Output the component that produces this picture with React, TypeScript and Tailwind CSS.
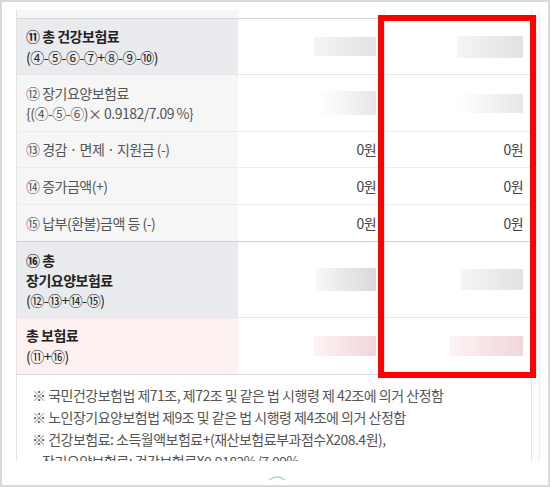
type Row = {
  h: string;
  bg: string;
  border: string;
  label: React.ReactNode;
  col2: React.ReactNode;
  col3: React.ReactNode;
};

const Blur = ({ w, h, tone = 'gray' }: { w: string; h: string; tone?: 'gray' | 'light' | 'dark' | 'pink' }) => {
  const toneClass =
    tone === 'pink'
      ? 'from-[#fdf3f4] to-[#f0d6db]'
      : tone === 'light'
        ? 'from-[#ffffff] to-[#e7e7e9]'
        : tone === 'dark'
          ? 'from-[#f7f7f7] to-[#d9d9dc]'
          : 'from-[#f5f5f5] to-[#e2e2e5]';
  return <div className={`${w} ${h} bg-linear-to-r ${toneClass}`} />;
};

const Won = () => <span className="text-[14px] tracking-[-0.6px] text-[#444]">0원</span>;

const rows: Row[] = [
  {
    h: 'h-[56px]',
    bg: 'bg-[#e9ebee]',
    border: 'border-[#e6e6e6]',
    label: (
      <div className="leading-[21px] text-[#222]">
        <p className="font-bold">⑪ 총 건강보험료</p>
        <p>(④-⑤-⑥-⑦+⑧-⑨-⑩)</p>
      </div>
    ),
    col2: <Blur w="w-[62px]" h="h-[19px]" />,
    col3: <Blur w="w-[66px]" h="h-[22px]" />,
  },
  {
    h: 'h-[57px]',
    bg: 'bg-[#f6f6f6]',
    border: 'border-[#ececec]',
    label: (
      <div className="leading-[20px] text-[#555]">
        <p>⑫ 장기요양보험료</p>
        <p>{'{(④-⑤-⑥)× 0.9182/7.09 %}'}</p>
      </div>
    ),
    col2: <Blur w="w-[57px]" h="h-[24px]" tone="light" />,
    col3: <Blur w="w-[65px]" h="h-[19px]" tone="light" />,
  },
  {
    h: 'h-[36px]',
    bg: 'bg-[#f6f6f6]',
    border: 'border-[#ececec]',
    label: <p className="text-[#555]">⑬ 경감 · 면제 · 지원금 (-)</p>,
    col2: <Won />,
    col3: <Won />,
  },
  {
    h: 'h-[37px]',
    bg: 'bg-[#f6f6f6]',
    border: 'border-[#ececec]',
    label: <p className="text-[#555]">⑭ 증가금액(+)</p>,
    col2: <Won />,
    col3: <Won />,
  },
  {
    h: 'h-[37px]',
    bg: 'bg-[#f6f6f6]',
    border: 'border-[#cfcfcf]',
    label: <p className="text-[#555]">⑮ 납부(환불)금액 등 (-)</p>,
    col2: <Won />,
    col3: <Won />,
  },
  {
    h: 'h-[76px]',
    bg: 'bg-[#e9ebee]',
    border: 'border-[#e6e6e6]',
    label: (
      <div className="leading-[20px] text-[#222]">
        <p className="font-bold">⑯ 총</p>
        <p className="font-bold">장기요양보험료</p>
        <p>(⑫-⑬+⑭-⑮)</p>
      </div>
    ),
    col2: <Blur w="w-[60px]" h="h-[23px]" tone="dark" />,
    col3: <Blur w="w-[62px]" h="h-[21px]" />,
  },
  {
    h: 'h-[57px]',
    bg: 'bg-[#fdf0f0]',
    border: 'border-[#d9d9d9]',
    label: (
      <div className="leading-[21px] text-[#222]">
        <p className="font-bold">총 보험료</p>
        <p>(⑪+⑯)</p>
      </div>
    ),
    col2: <Blur w="w-[62px]" h="h-[20px]" tone="pink" />,
    col3: <Blur w="w-[73px]" h="h-[20px]" tone="pink" />,
  },
];

export default function App() {
  return (
    <div className="relative w-[550px] h-[487px] overflow-hidden border-2 border-[#d9d9d9] bg-white font-['Noto_Sans_CJK_KR','Noto_Sans',sans-serif] text-[14px] tracking-[-0.5px]">
      <div className="ml-[14px] mt-[8px] flex h-[451px] w-[524px] overflow-hidden">
        <div className="w-[516px] border-x border-[#e3e3e3]">
          {/* tail of the previous row */}
          <div className="grid h-[9px] grid-cols-[221px_146px_147px] border-b border-[#d4d4d4]">
            <div className="bg-[#f6f6f6]" />
            <div />
            <div className="border-l border-[#efefef]" />
          </div>

          {rows.map((row, i) => (
            <div key={i} className={`grid ${row.h} grid-cols-[221px_146px_147px] border-b ${row.border}`}>
              <div className={`flex items-center pl-[9px] ${row.bg}`}>{row.label}</div>
              <div className="flex items-center justify-end pr-[8px]">{row.col2}</div>
              <div className="flex items-center justify-end border-l border-[#efefef] pr-[8px]">{row.col3}</div>
            </div>
          ))}

          <div className="pl-[15px] pt-[9px] text-[14px] leading-[22px] text-[#555]">
            <p>※ 국민건강보험법 제71조, 제72조 및 같은 법 시행령 제 42조에 의거 산정함</p>
            <p>※ 노인장기요양보험법 제9조 및 같은 법 시행령 제4조에 의거 산정함</p>
            <p>※ 건강보험료: 소득월액보험료+(재산보험료부과점수X208.4원),</p>
            <p className="pl-[10px]">장기요양보험료: 건강보험료X0.9182%/7.09%</p>
          </div>
        </div>
        <div className="w-[8px] border-r border-[#eeeeee] bg-[#fcfcfc]" />
      </div>

      {/* floating button peeking from below */}
      <svg className="absolute left-[264px] top-[471px]" width="22" height="8" viewBox="0 0 22 8">
        <path d="M3 7 Q11 1 19 7" fill="none" stroke="#4fd493" strokeWidth="1.5" opacity="0.6" />
      </svg>

      {/* red highlight box */}
      <div className="pointer-events-none absolute left-[376px] top-[13px] h-[363px] w-[158px] border-[6px] border-[#ff0000]" />
    </div>
  );
}
